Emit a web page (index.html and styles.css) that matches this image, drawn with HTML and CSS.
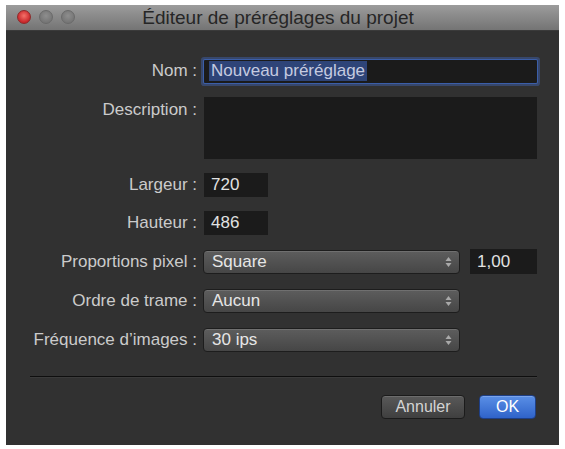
FILE: index.html
```html
<!DOCTYPE html>
<html lang="fr">
<head>
<meta charset="utf-8">
<title>Éditeur de préréglages du projet</title>
<link rel="stylesheet" href="styles.css">
</head>
<body>
<div class="window">
  <div class="titlebar">
    <div class="lights">
      <span class="light red"></span>
      <span class="light grey"></span>
      <span class="light grey"></span>
    </div>
    <div class="title">Éditeur de préréglages du projet</div>
  </div>
  <div class="content">
    <div class="form">
      <div class="row">
        <label class="label">Nom :</label>
        <div class="field wide focus"><span class="sel">Nouveau préréglage</span></div>
      </div>
      <div class="row desc">
        <label class="label">Description :</label>
        <div class="field wide area"></div>
      </div>
      <div class="row">
        <label class="label">Largeur :</label>
        <div class="field small">720</div>
      </div>
      <div class="row">
        <label class="label">Hauteur :</label>
        <div class="field small">486</div>
      </div>
      <div class="row pop">
        <label class="label">Proportions pixel :</label>
        <div class="popup"><span>Square</span><span class="arrows"><svg width="7" height="12" viewBox="0 0 7 12"><path d="M3.5 1 L6.5 5 H0.5 Z M3.5 11 L6.5 7 H0.5 Z" fill="#a9a9a9"/></svg></span></div>
        <div class="field num">1,00</div>
      </div>
      <div class="row pop">
        <label class="label">Ordre de trame :</label>
        <div class="popup"><span>Aucun</span><span class="arrows"><svg width="7" height="12" viewBox="0 0 7 12"><path d="M3.5 1 L6.5 5 H0.5 Z M3.5 11 L6.5 7 H0.5 Z" fill="#a9a9a9"/></svg></span></div>
      </div>
      <div class="row pop">
        <label class="label">Fréquence d’images :</label>
        <div class="popup"><span>30 ips</span><span class="arrows"><svg width="7" height="12" viewBox="0 0 7 12"><path d="M3.5 1 L6.5 5 H0.5 Z M3.5 11 L6.5 7 H0.5 Z" fill="#a9a9a9"/></svg></span></div>
      </div>
    </div>
    <div class="separator"></div>
    <div class="buttons">
      <button class="btn cancel">Annuler</button>
      <button class="btn ok">OK</button>
    </div>
  </div>
</div>
</body>
</html>
```
FILE: styles.css
```css
html, body {
  margin: 0;
  padding: 0;
  background: #ffffff;
}
body {
  padding: 5px 0 0 6px;
  font-family: "Liberation Sans", Arial, sans-serif;
}
.window {
  width: 553px;
  height: 440px;
  background: #313131;
  display: flex;
  flex-direction: column;
}
.titlebar {
  height: 26px;
  background: linear-gradient(#9c9c9c, #747474);
  border-bottom: 1px solid #3a3a3a;
  box-sizing: border-box;
  display: flex;
  align-items: center;
  position: relative;
}
.lights {
  position: absolute;
  left: 11px;
  top: 5px;
  display: flex;
  gap: 8px;
}
.light {
  width: 14px;
  height: 14px;
  border-radius: 50%;
  box-sizing: border-box;
}
.light.red {
  background: radial-gradient(circle at 50% 40%, #f57169, #c8262a 70%);
  border: 1px solid #8e2a2a;
}
.light.grey {
  background: radial-gradient(circle at 50% 40%, #8e8e8e, #767676 70%);
  border: 1px solid #6a6a6a;
}
.title {
  flex: 1;
  text-align: center;
  font-size: 19px;
  color: #262626;
  padding-right: 9px;
}
.content {
  flex: 1;
  display: flex;
  flex-direction: column;
}
.form {
  display: flex;
  flex-direction: column;
  gap: 14px;
  padding-top: 28px;
}
.row {
  display: flex;
  align-items: center;
  height: 24px;
}
.row.pop {
  height: 25px;
}
.row.desc {
  height: 62px;
  align-items: flex-start;
}
.row.desc .label {
  padding-top: 3px;
}
.label {
  width: 191px;
  text-align: right;
  font-size: 17px;
  color: #cbcbcb;
  flex-shrink: 0;
  padding-right: 7px;
  box-sizing: content-box;
  white-space: nowrap;
}
.field {
  background: #1b1b1b;
  color: #e2e2e2;
  font-size: 17px;
  height: 100%;
  box-sizing: border-box;
  display: flex;
  align-items: center;
  padding-left: 7px;
}
.field.wide {
  width: 333px;
}
.field.focus {
  height: 23px;
  padding-left: 5px;
  box-shadow: 0 0 0 1px #3b5ea8, 0 0 0 3px rgba(65, 100, 180, 0.45);
  border-radius: 1px;
}
.sel {
  background: #2e4478;
  color: #c5cbe0;
  padding: 0 2px;
  line-height: 20px;
}
.field.area {
  height: 62px;
}
.field.small {
  width: 64px;
}
.field.num {
  width: 67px;
  margin-left: 10px;
}
.popup {
  width: 257px;
  height: 24px;
  margin-left: -1px;
  box-sizing: border-box;
  border: 1px solid #1d1d1d;
  border-radius: 4px;
  background: linear-gradient(#5d5d5d, #464646);
  box-shadow: inset 0 1px 0 rgba(255,255,255,0.12);
  display: flex;
  align-items: center;
  justify-content: space-between;
  padding: 0 7px 0 8px;
  font-size: 17px;
  color: #e6e6e6;
}
.arrows {
  display: flex;
  align-items: center;
}
.separator {
  margin: 24px 22px 0 24px;
  height: 1px;
  background: #0e0e0e;
  border-bottom: 1px solid #3a3a3a;
}
.buttons {
  display: flex;
  justify-content: flex-end;
  gap: 14px;
  padding: 17px 23px 0 0;
}
.btn {
  height: 24px;
  font-family: "Liberation Sans", Arial, sans-serif;
  font-size: 16px;
  border-radius: 4px;
  box-sizing: border-box;
  padding: 0;
}
.btn.cancel {
  width: 84px;
  color: #d4d4d4;
  background: linear-gradient(#595959, #3f3f3f);
  border: 1px solid #1b1b1b;
  box-shadow: inset 0 1px 0 rgba(255,255,255,0.12);
}
.btn.ok {
  width: 57px;
  color: #ffffff;
  background: linear-gradient(#5a8fe6, #2f63c9);
  border: 1px solid #1e3f86;
  box-shadow: inset 0 1px 0 rgba(255,255,255,0.2);
}
```
